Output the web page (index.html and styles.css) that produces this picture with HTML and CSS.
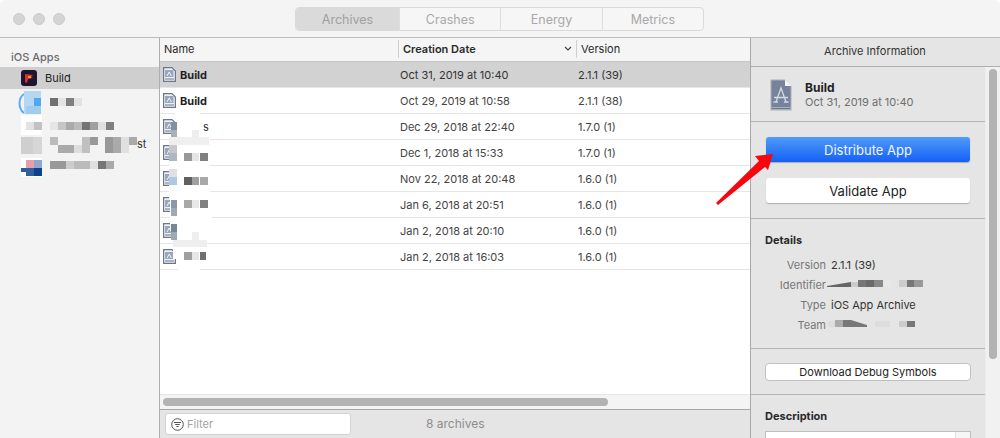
FILE: index.html
```html
<!DOCTYPE html>
<html lang="en">
<head>
  <meta charset="UTF-8">
  <title>Organizer</title>
  <link rel="stylesheet" href="styles.css">
</head>
<body>
  <svg class="defs" width="0" height="0">
    <symbol id="doc" viewBox="0 0 22 32">
      <path d="M.5.5H15L21.500 7V31.500H.5Z" fill="#a9b1bd"/>
      <path d="M1.500 1.500H15V7H20.500V28H1.500Z" fill="#76839a"/>
      <path d="M15 .5V7H21.500Z" fill="#f6f6f8"/>
      <path d="M1.500 29.500H20.500" stroke="#6a7689"/>
      <path d="M6 23L11 9L16 23M4 18.500H18M3.500 23H8M14 23H18.500" stroke="#d5dae2" stroke-width="1.300" fill="none"/>
    </symbol>
    <symbol id="doc-small" viewBox="0 0 13 15">
      <path d="M.6.6H9L12.400 4V14.400H.6Z" fill="#eef0f4" stroke="#6a778d" stroke-width="1.200"/>
      <rect x="2" y="3" width="8.500" height="7" fill="#9aa7bc"/>
      <path d="M4 9L6.200 5L8.400 9" stroke="#f2f4f8" fill="none"/>
      <path d="M2 12H11" stroke="#6a778d"/>
    </symbol>
  </svg>

  <div class="window">
    <header class="titlebar">
      <div class="lights"><span></span><span></span><span></span></div>
      <nav class="tabs">
        <a class="tab active">Archives</a>
        <a class="tab">Crashes</a>
        <a class="tab">Energy</a>
        <a class="tab">Metrics</a>
      </nav>
    </header>

    <div class="content">
      <aside class="sidebar">
        <h4>iOS Apps</h4>
        <div class="app selected">
          <svg class="app-icon" width="16" height="16" viewBox="0 0 16 16">
            <rect width="16" height="16" rx="3" fill="#1e1630"/>
            <path d="M4 4L12 5L10 7L12 8L7 9L6 13L4 12Z" fill="#d9302c"/>
            <rect x="7" y="6" width="3" height="2" fill="#f0a030"/>
          </svg>
          <span>Build</span>
        </div>
        <!-- names are blurred in the screenshot -->
        <svg class="blurred-apps" width="159" height="90" viewBox="0 0 159 90">
          <path d="M24 3A9 11 0 0 0 24 22" fill="none" stroke="#58aef0" stroke-width="2"/>
          <rect x="24" y="0" width="17" height="23" fill="#b4d8f4"/>
          <rect x="26" y="15" width="15" height="8" fill="#a0ccee"/>
          <rect x="34" y="7" width="7" height="8" fill="#50a8f0"/>
          <rect x="50" y="7" width="8" height="8" fill="#707070"/>
          <rect x="58" y="7" width="8" height="8" fill="#e4e4e4"/>
          <rect x="66" y="7" width="8" height="8" fill="#808080"/>
          <rect x="74" y="7" width="8" height="8" fill="#e2e2e2"/>

          <rect x="21" y="24" width="21" height="20" fill="#fff"/>
          <rect x="26" y="31" width="8" height="8" fill="#e2e2e2"/>
          <rect x="34" y="31" width="8" height="8" fill="#c2c2c2"/>
          <rect x="50" y="31" width="8" height="8" fill="#e6e6e6"/>
          <rect x="58" y="31" width="8" height="8" fill="#c6c6c6"/>
          <rect x="66" y="31" width="8" height="8" fill="#aaa"/>
          <rect x="74" y="31" width="8" height="8" fill="#bbb"/>
          <rect x="82" y="31" width="8" height="8" fill="#747474"/>
          <rect x="90" y="31" width="8" height="8" fill="#a0a0a0"/>
          <rect x="98" y="31" width="8" height="8" fill="#e0e0e0"/>
          <rect x="106" y="31" width="8" height="8" fill="#808080"/>

          <rect x="21" y="46" width="12" height="17" fill="#cfcfcf"/>
          <rect x="33" y="46" width="9" height="17" fill="#d6d6d6"/>
          <rect x="50" y="46" width="8" height="8" fill="#bbb"/>
          <rect x="58" y="54" width="16" height="8" fill="#aaa"/>
          <rect x="74" y="54" width="8" height="8" fill="#ddd"/>
          <rect x="82" y="46" width="8" height="16" fill="#c0c0c0"/>
          <rect x="90" y="46" width="8" height="8" fill="#999"/>
          <rect x="105" y="46" width="8" height="16" fill="#999"/>
          <rect x="113" y="46" width="8" height="16" fill="#aaa"/>
          <rect x="121" y="46" width="8" height="16" fill="#e0e0e0"/>
          <rect x="129" y="46" width="8" height="8" fill="#aaa"/>

          <rect x="21" y="67" width="21" height="19" fill="#fff"/>
          <rect x="26" y="69" width="8" height="8" fill="#e8a0a8"/>
          <rect x="34" y="69" width="8" height="8" fill="#90a8d0"/>
          <rect x="26" y="77" width="8" height="8" fill="#3060a0"/>
          <rect x="34" y="77" width="8" height="8" fill="#104088"/>
          <rect x="21" y="77" width="5" height="4" fill="#305a98"/>
          <rect x="50" y="70" width="16" height="8" fill="#999"/>
          <rect x="66" y="70" width="8" height="8" fill="#ccc"/>
          <rect x="74" y="70" width="16" height="8" fill="#bbb"/>
          <rect x="90" y="70" width="8" height="8" fill="#e0e0e0"/>
          <rect x="98" y="70" width="8" height="8" fill="#777"/>
          <rect x="106" y="70" width="8" height="8" fill="#aaa"/>
          <text class="leftover" x="137" y="57">st</text>
        </svg>
      </aside>

      <main class="archives">
        <div class="thead">
          <div class="th">Name</div>
          <div class="th sorted">Creation Date
            <svg width="8" height="5" viewBox="0 0 8 5"><path d="M1 1L4 4L7 1" fill="none" stroke="#444" stroke-width="1.200"/></svg>
          </div>
          <div class="th">Version</div>
        </div>

        <div class="rows">
          <div class="row selected">
            <div class="name"><svg width="13" height="15"><use href="#doc-small"/></svg><b>Build</b></div>
            <div>Oct 31, 2019 at 10:40</div><div>2.1.1 (39)</div>
          </div>
          <div class="row">
            <div class="name"><svg width="13" height="15"><use href="#doc-small"/></svg><b>Build</b></div>
            <div>Oct 29, 2019 at 10:58</div><div>2.1.1 (38)</div>
          </div>
          <div class="row">
            <div class="name"><svg width="13" height="15"><use href="#doc-small"/></svg></div>
            <div>Dec 29, 2018 at 22:40</div><div>1.7.0 (1)</div>
          </div>
          <div class="row">
            <div class="name"><svg width="13" height="15"><use href="#doc-small"/></svg></div>
            <div>Dec 1, 2018 at 15:33</div><div>1.7.0 (1)</div>
          </div>
          <div class="row">
            <div class="name"><svg width="13" height="15"><use href="#doc-small"/></svg></div>
            <div>Nov 22, 2018 at 20:48</div><div>1.6.0 (1)</div>
          </div>
          <div class="row">
            <div class="name"><svg width="13" height="15"><use href="#doc-small"/></svg></div>
            <div>Jan 6, 2018 at 20:51</div><div>1.6.0 (1)</div>
          </div>
          <div class="row">
            <div class="name"><svg width="13" height="15"><use href="#doc-small"/></svg></div>
            <div>Jan 2, 2018 at 20:10</div><div>1.6.0 (1)</div>
          </div>
          <div class="row">
            <div class="name"><svg width="13" height="15"><use href="#doc-small"/></svg></div>
            <div>Jan 2, 2018 at 16:03</div><div>1.6.0 (1)</div>
          </div>

          <!-- smudged names sit on top of the rows -->
          <svg class="smudge" width="60" height="164" viewBox="0 0 60 164">
            <rect x="15" y="0" width="25" height="24" fill="#fff"/>
            <rect x="9" y="24" width="41" height="62" fill="#fff"/>
            <rect x="10" y="86" width="42" height="32" fill="#fff"/>
            <rect x="13" y="118" width="34" height="28" fill="#fff"/>
            <rect x="18" y="146" width="22" height="18" fill="#fff"/>
            <rect x="11" y="9" width="6" height="8" fill="#8290a6"/>
            <rect x="11" y="17" width="6" height="8" fill="#a8b0bc"/>
            <rect x="32" y="17" width="7" height="7" fill="#eee"/>
            <rect x="9" y="24" width="40" height="8" fill="#efefef"/>
            <text class="leftover" x="43" y="18">s</text>
            <rect x="9" y="32" width="8" height="8" fill="#c8c8cc"/>
            <rect x="9" y="40" width="8" height="8" fill="#aeb8c2"/>
            <rect x="24" y="40" width="8" height="8" fill="#999"/>
            <rect x="32" y="40" width="7" height="8" fill="#e5e5e5"/>
            <rect x="40" y="40" width="8" height="8" fill="#808080"/>
            <rect x="9" y="56" width="8" height="8" fill="#e0e0e4"/>
            <rect x="9" y="64" width="8" height="8" fill="#b0c8e0"/>
            <rect x="24" y="64" width="8" height="8" fill="#606060"/>
            <rect x="32" y="64" width="7" height="8" fill="#a0a0a0"/>
            <rect x="40" y="64" width="8" height="8" fill="#a8a8a8"/>
            <rect x="11" y="87" width="6" height="8" fill="#8c98a8"/>
            <rect x="11" y="95" width="6" height="8" fill="#a0a8b4"/>
            <rect x="24" y="87" width="8" height="8" fill="#a8a8a8"/>
            <rect x="32" y="87" width="7" height="8" fill="#e8e8e8"/>
            <rect x="40" y="87" width="8" height="8" fill="#808080"/>
            <rect x="11" y="111" width="6" height="8" fill="#7a8598"/>
            <rect x="11" y="119" width="6" height="8" fill="#a0a8b0"/>
            <rect x="32" y="119" width="7" height="8" fill="#eee"/>
            <rect x="13" y="127" width="34" height="7" fill="#eee"/>
            <rect x="24" y="139" width="8" height="8" fill="#a0a0a0"/>
            <rect x="32" y="139" width="7" height="8" fill="#e6e6e6"/>
            <rect x="40" y="139" width="6" height="8" fill="#707070"/>
          </svg>
        </div>

        <div class="hscroll"><span class="thumb"></span></div>

        <footer class="statusbar">
          <label class="filter">
            <svg width="13" height="13" viewBox="0 0 13 13">
              <circle cx="6.500" cy="6.500" r="5.800" fill="none" stroke="#555"/>
              <path d="M3 4.500H10M4.200 6.500H8.800M5.400 8.500H7.600" stroke="#555"/>
            </svg>
            <span>Filter</span>
          </label>
          <span class="count">8 archives</span>
        </footer>
      </main>

      <section class="info">
        <div class="info-title">Archive Information</div>
        <div class="info-main">
          <div class="info-scroll">
            <div class="summary">
              <svg width="22" height="32"><use href="#doc"/></svg>
              <div>
                <strong>Build</strong>
                <p>Oct 31, 2019 at 10:40</p>
              </div>
            </div>

            <div class="actions">
              <button class="btn primary">Distribute App</button>
              <button class="btn">Validate App</button>
            </div>

            <div class="details">
              <h5>Details</h5>
              <dl>
                <dt>Version</dt><dd>2.1.1 (39)</dd>
                <dt>Identifier</dt>
                <dd>
                  <svg width="100" height="10" viewBox="0 0 100 10">
                    <path d="M0 6L24 2V7H0Z" fill="#666"/>
                    <rect x="24" y="2" width="7" height="5" fill="#ccc"/>
                    <rect x="31" y="0" width="8" height="7" fill="#777"/>
                    <rect x="39" y="0" width="8" height="7" fill="#6a6a6a"/>
                    <rect x="47" y="0" width="9" height="7" fill="#888"/>
                    <rect x="56" y="0" width="7" height="7" fill="#e8e8e8"/>
                    <rect x="72" y="0" width="8" height="7" fill="#ccc"/>
                    <rect x="80" y="0" width="7" height="7" fill="#777"/>
                    <rect x="87" y="0" width="9" height="7" fill="#999"/>
                  </svg>
                </dd>
                <dt>Type</dt><dd>iOS App Archive</dd>
                <dt>Team</dt>
                <dd>
                  <svg width="100" height="10" viewBox="0 0 100 10">
                    <rect x="1" y="1" width="7" height="6" fill="#ddd"/>
                    <rect x="8" y="0" width="8" height="7" fill="#aaa"/>
                    <path d="M16 0H24L40 5V7H16Z" fill="#777"/>
                    <rect x="48" y="1" width="15" height="6" fill="#ddd"/>
                    <rect x="72" y="1" width="8" height="6" fill="#ccc"/>
                    <rect x="80" y="1" width="8" height="6" fill="#777"/>
                  </svg>
                </dd>
              </dl>
            </div>

            <div class="symbols">
              <button class="btn small">Download Debug Symbols</button>
            </div>

            <div class="description">
              <h5>Description</h5>
              <div class="desc-box"><span class="desc-text"></span><span class="desc-bar"></span></div>
            </div>
          </div>
          <div class="vscroll"><span class="thumb"></span></div>
        </div>
      </section>
    </div>

    <!-- annotation added on top of the screenshot -->
    <svg class="arrow" width="62" height="54" viewBox="0 0 62 54">
      <path d="M1 49L44 7L40 2L58 0L53 16L50 13L3 51Z" fill="#f8060e"/>
    </svg>
  </div>
</body>
</html>
```

FILE: styles.css
```css
*, *::before, *::after {
  margin: 0;
  padding: 0;
  box-sizing: border-box;
}

body {
  font-family: Inter, "Liberation Sans", sans-serif;
  font-size: 11px;
  color: #2a2a2a;
  background: #fff;
  overflow: hidden;
}

.defs {
  position: absolute;
}

.window {
  position: relative;
  width: 1000px;
  height: 438px;
  display: flex;
  flex-direction: column;
  border-radius: 5px 5px 0 0;
  overflow: hidden;
}

/* Title bar */
.titlebar {
  height: 38px;
  flex: none;
  display: flex;
  align-items: flex-start;
  background: #f4f4f4;
  border-bottom: 1px solid #bdbdbd;
  padding: 7px 296px 0 13px;
  justify-content: space-between;
}

.lights {
  display: flex;
  gap: 8px;
  padding-top: 6px;
}

.lights span {
  width: 12px;
  height: 12px;
  border-radius: 50%;
  background: #d4d4d4;
  border: 1px solid #cacaca;
}

.tabs {
  display: flex;
  width: 409px;
  height: 24px;
  border: 1px solid #dadada;
  border-radius: 4px;
  overflow: hidden;
  background: #f6f6f6;
}

.tab {
  flex: 1;
  display: flex;
  align-items: center;
  justify-content: center;
  font-size: 12.500px;
  color: #a9a9a9;
  border-left: 1px solid #dedede;
}

.tab.active {
  flex: none;
  width: 103px;
  border-left: none;
  background: #dadada;
  color: #a0a0a0;
}

.content {
  flex: 1;
  display: flex;
  min-height: 0;
}

/* Sidebar */
.sidebar {
  width: 160px;
  flex: none;
  background: #f3f3f3;
  border-right: 1px solid #aeaeae;
  padding-top: 13px;
}

.sidebar h4 {
  font-size: 11px;
  font-weight: 500;
  color: #6c6c6c;
  padding-left: 11px;
  height: 16px;
  line-height: 13px;
}

.app {
  display: flex;
  align-items: center;
  gap: 8px;
  height: 22px;
  padding-left: 21px;
}

.app.selected {
  background: #cfcfcf;
}

.app span {
  color: #222;
}

.blurred-apps {
  display: block;
  margin-top: 2px;
}

.leftover {
  font-family: Inter, "Liberation Sans", sans-serif;
  font-size: 11px;
  fill: #333;
}

/* Archives table */
.archives {
  flex: 1;
  min-width: 0;
  display: flex;
  flex-direction: column;
  background: #fff;
}

.thead,
.row {
  display: grid;
  grid-template-columns: 238px 178px 1fr;
}

.thead {
  height: 24px;
  flex: none;
  background: #f5f5f5;
  border-bottom: 1px solid #c4c4c4;
  align-items: center;
  padding-bottom: 2px;
}

.th {
  height: 18px;
  line-height: 18px;
  padding-left: 4px;
  border-left: 1px solid #cfcfcf;
  color: #2a2a2a;
}

.th:first-child {
  border-left: none;
}

.th.sorted {
  display: flex;
  align-items: center;
  justify-content: space-between;
  font-weight: 600;
  padding-right: 4px;
}

.rows {
  position: relative;
  flex: 1;
  min-height: 0;
}

.row {
  height: 26px;
  align-items: center;
  border-bottom: 1px solid #e6e6e6;
  color: #444;
}

.row > div:nth-child(n+2) {
  padding-left: 2px;
}

.row.selected {
  background: #d2d2d2;
  color: #333;
}

.name {
  display: flex;
  align-items: center;
  gap: 4px;
  padding-left: 3px;
}

.name b {
  font-weight: 700;
  color: #1f1f1f;
}

.smudge {
  position: absolute;
  left: 0;
  top: 51px;
}

.hscroll {
  height: 16px;
  flex: none;
  border-top: 1px solid #e6e6e6;
  border-bottom: 1px solid #a8a8a8;
  background: #f4f4f4;
  padding: 3px 3px 0;
}

.hscroll .thumb {
  display: block;
  width: 445px;
  height: 8px;
  border-radius: 4px;
  background: #b3b3b3;
}

.statusbar {
  height: 28px;
  flex: none;
  background: #e5e5e5;
  display: flex;
  align-items: center;
  padding-left: 5px;
}

.filter {
  width: 186px;
  height: 22px;
  display: flex;
  align-items: center;
  gap: 3px;
  padding-left: 5px;
  background: #fff;
  border: 1px solid #d2d2d2;
  border-radius: 3px;
  color: #a3a3a3;
}

.count {
  margin-left: 75px;
  font-size: 12px;
  color: #8d8d8d;
  padding-bottom: 1px;
}

/* Inspector */
.info {
  width: 250px;
  flex: none;
  display: flex;
  flex-direction: column;
  background: #e5e5e5;
  border-left: 1px solid #a8a8a8;
}

.info-title {
  height: 29px;
  flex: none;
  border-bottom: 1px solid #aeaeae;
  display: flex;
  align-items: center;
  justify-content: center;
  color: #333;
  padding: 0 1px 2px 0;
}

.info-main {
  flex: 1;
  display: flex;
  min-height: 0;
}

.info-scroll {
  width: 234px;
  flex: none;
}

.vscroll {
  flex: 1;
  background: #f1f1f1;
  border-left: 1px solid #ececec;
  padding: 2px 3px 0 3px;
}

.vscroll .thumb {
  display: block;
  width: 8px;
  height: 290px;
  border-radius: 4px;
  background: #b3b3b3;
}

.summary {
  height: 55px;
  display: flex;
  align-items: center;
  gap: 13px;
  padding: 2px 0 0 19px;
  border-bottom: 1px solid #b4b4b4;
}

.summary strong {
  display: block;
  font-size: 12px;
  font-weight: 700;
  color: #222;
  line-height: 14px;
}

.summary p {
  color: #6f6f6f;
  line-height: 14px;
}

.actions {
  height: 97px;
  display: flex;
  flex-direction: column;
  gap: 16px;
  padding: 15px 15px 0;
  border-bottom: 1px solid #b4b4b4;
}

.btn {
  display: block;
  width: 204px;
  height: 25px;
  border: none;
  border-radius: 3px;
  font: inherit;
  font-size: 13px;
  color: #222;
  background: #fff;
  box-shadow: 0 1px 1px rgba(0, 0, 0, .25);
}

.btn.primary {
  color: #f2f6ff;
  background: linear-gradient(#4f9bfb, #1560f5);
}

.btn.small {
  width: 206px;
  height: 18px;
  font-size: 11px;
  border: 1px solid #c0c0c0;
  border-radius: 4px;
  box-shadow: none;
}

.details {
  height: 130px;
  padding: 14px 0 0 14px;
  border-bottom: 1px solid #b4b4b4;
}

h5 {
  font-size: 11px;
  font-weight: 700;
  color: #2a2a2a;
  line-height: 14px;
}

dl {
  display: grid;
  grid-template-columns: 61px 1fr;
  column-gap: 5px;
  grid-auto-rows: 20px;
  margin-top: 8px;
  line-height: 20px;
}

dt {
  text-align: right;
  color: #777;
}

dd {
  color: #333;
}

dd svg {
  display: block;
  margin: 5px 0 0 -4px;
}

.symbols {
  height: 46px;
  padding: 14px 0 0 14px;
  border-bottom: 1px solid #b4b4b4;
}

.description {
  padding: 14px 0 0 14px;
}

.desc-box {
  display: flex;
  width: 206px;
  height: 30px;
  margin-top: 8px;
  background: #fff;
  border: 1px solid #bdbdbd;
}

.desc-text {
  flex: 1;
}

.desc-bar {
  width: 15px;
  background: #f6f6f6;
  border-left: 1px solid #e2e2e2;
}

/* Red annotation arrow */
.arrow {
  position: absolute;
  left: 715px;
  top: 154px;
}
```
